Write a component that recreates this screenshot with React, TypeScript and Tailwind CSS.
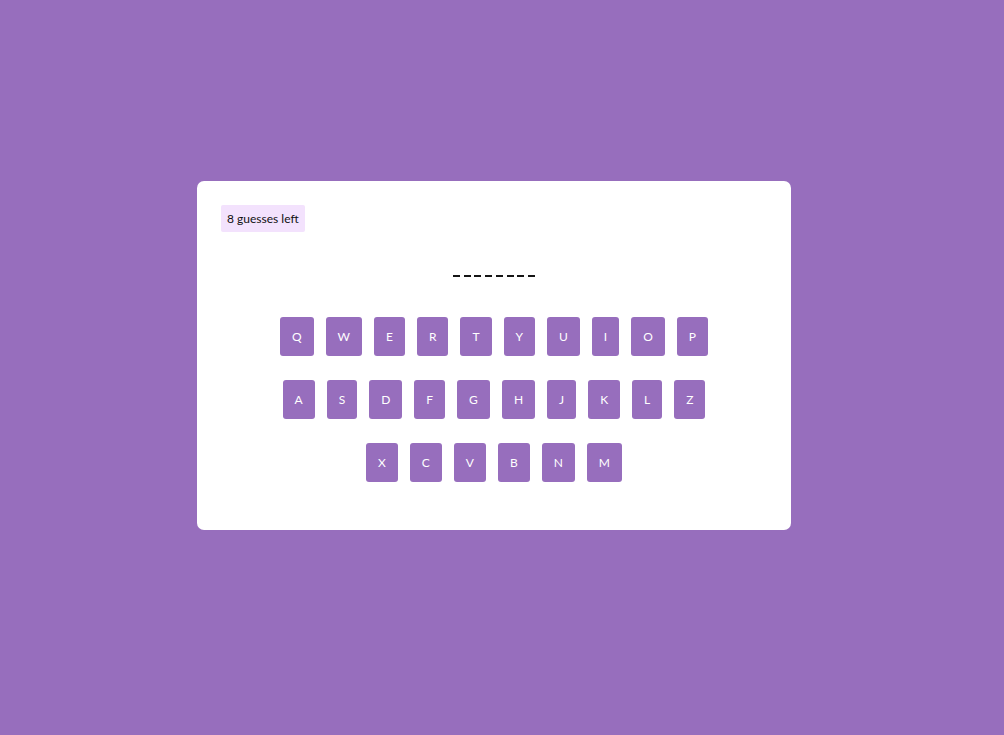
import React from "react";

const rows = [
  ["Q", "W", "E", "R", "T", "Y", "U", "I", "O", "P"],
  ["A", "S", "D", "F", "G", "H", "J", "K", "L", "Z"],
  ["X", "C", "V", "B", "N", "M"],
];

export default function App() {
  return (
    <div
      className="min-h-screen w-full bg-[#976ebd] flex items-center justify-center pr-[16px] pb-[24px]"
      style={{ fontFamily: "Lato, 'Open Sans', sans-serif" }}
    >
      <div className="w-[594px] bg-white rounded-[7px] px-[24px] pt-[24px] pb-[48px]">
        <div className="flex">
          <div className="bg-[#f3e2fd] text-[#111] text-[12px] leading-[15px] px-[6px] py-[6px] rounded-[2px]">
            8 guesses left
          </div>
        </div>
        <div className="mt-[43px] flex justify-center gap-[3.7px]">
          {Array.from({ length: 8 }).map((_, i) => (
            <div key={i} className="w-[7px] h-[2px] bg-[#151515]" />
          ))}
        </div>
        <div className="mt-[40px] flex flex-col gap-[24px]">
          {rows.map((row, ri) => (
            <div key={ri} className="flex justify-center gap-[12px]">
              {row.map((k) => (
                <button
                  key={k}
                  className="bg-[#976ebd] text-white text-[12px] leading-[15px] px-[12px] py-[12px] rounded-[3px]"
                >
                  {k}
                </button>
              ))}
            </div>
          ))}
        </div>
      </div>
    </div>
  );
}
